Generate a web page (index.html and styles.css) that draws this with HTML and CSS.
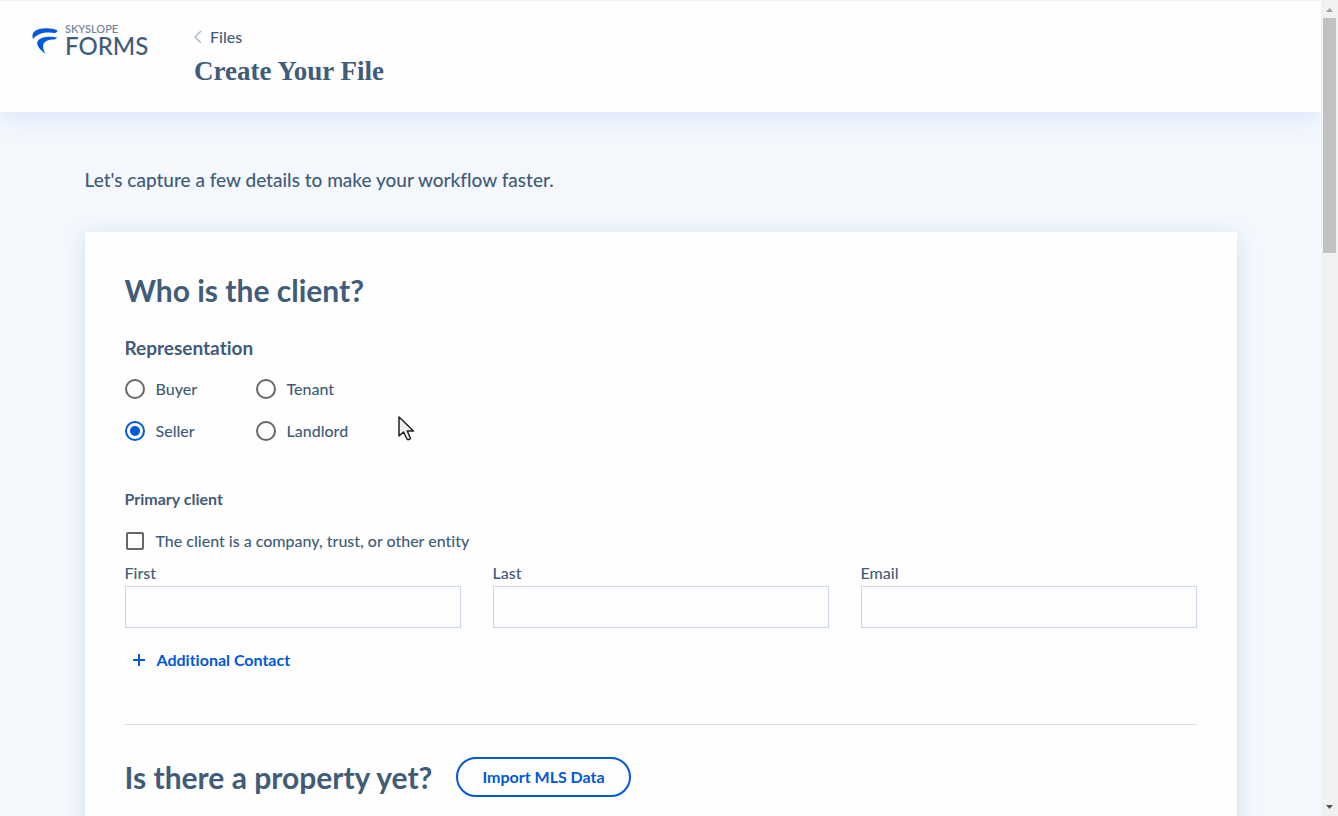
FILE: index.html
```html
<!DOCTYPE html>
<html lang="en">
<head>
    <meta charset="UTF-8">
    <meta name="viewport" content="width=device-width, initial-scale=1.0">
    <title>Create Your File</title>
    <link rel="stylesheet" href="styles.css">
</head>
<body>
    <div class="window">
        <div class="page">
            <header class="header">
                <a href="#" class="logo">
                    <svg class="logo-mark" width="26" height="27" viewBox="0 0 26 27" aria-hidden="true">
                        <path d="M1 11C-1 5 3 1 11 .5C17 0 22 1 25.500 2.500C25 4 24.500 4.500 23 5C15 3.500 6 4.500 1 11Z" fill="#0059da"/>
                        <path d="M13.500 26C8 22 4 17 5.500 13.500C8 9 17 8 25 9.500C24 11 23 11.500 21 11.500C14 12 7.500 14.500 13.500 26Z" fill="#0059da"/>
                    </svg>
                    <span class="logo-text">
                        <span class="logo-small">SKYSLOPE</span>
                        <span class="logo-big">FORMS</span>
                    </span>
                </a>
                <div class="titles">
                    <a href="#" class="back">
                        <svg width="8" height="14" viewBox="0 0 8 14" aria-hidden="true">
                            <path d="M7 1L1 7L7 13" fill="none" stroke="#a9bccd" stroke-width="1.500"/>
                        </svg>
                        Files
                    </a>
                    <h1>Create Your File</h1>
                </div>
            </header>

            <main class="content">
                <p class="lead">Let's capture a few details to make your workflow faster.</p>

                <form class="card">
                    <h2>Who is the client?</h2>

                    <fieldset class="representation">
                        <legend>Representation</legend>
                        <div class="radios">
                            <label class="choice"><input type="radio" name="representation" value="buyer">Buyer</label>
                            <label class="choice"><input type="radio" name="representation" value="tenant">Tenant</label>
                            <label class="choice"><input type="radio" name="representation" value="seller" checked>Seller</label>
                            <label class="choice"><input type="radio" name="representation" value="landlord">Landlord</label>
                        </div>
                    </fieldset>

                    <h3>Primary client</h3>
                    <label class="choice entity"><input type="checkbox" name="entity">The client is a company, trust, or other entity</label>

                    <div class="fields">
                        <div class="field">
                            <label for="first">First</label>
                            <input type="text" id="first">
                        </div>
                        <div class="field">
                            <label for="last">Last</label>
                            <input type="text" id="last">
                        </div>
                        <div class="field">
                            <label for="email">Email</label>
                            <input type="email" id="email">
                        </div>
                    </div>

                    <button type="button" class="add">
                        <svg width="12" height="12" viewBox="0 0 12 12" aria-hidden="true">
                            <path d="M6 0V12M0 6H12" stroke="#0059da" stroke-width="2"/>
                        </svg>
                        Additional Contact
                    </button>

                    <div class="property">
                        <h2>Is there a property yet?</h2>
                        <button type="button" class="import">Import MLS Data</button>
                    </div>
                </form>
            </main>
        </div>

        <div class="scrollbar" aria-hidden="true">
            <svg width="7" height="4" viewBox="0 0 7 4"><path d="M0 4L3.500 0L7 4Z" fill="#a3a3a3"/></svg>
            <div class="thumb"></div>
            <svg class="down" width="7" height="4" viewBox="0 0 7 4"><path d="M0 0L3.500 4L7 0Z" fill="#505050"/></svg>
        </div>
    </div>

    <svg class="cursor" width="18" height="26" viewBox="0 0 18 26" aria-hidden="true">
        <path d="M2 2V21L6.500 17L10 24Q11.500 25.500 13.500 23.500L10.300 16H16.500Z" fill="#f0f0f2" stroke="#222" stroke-width="1.500" stroke-linejoin="round"/>
    </svg>
</body>
</html>
```
FILE: styles.css
```css
* {
    box-sizing: border-box;
}

body {
    margin: 0;
    font-family: Lato, "Liberation Sans", sans-serif;
    font-size: 16px;
    font-weight: 500;
    font-variant-ligatures: none;
    line-height: 20px;
    color: #415c78;
}

h1, h2, h3, p {
    margin: 0;
}

a {
    color: inherit;
    text-decoration: none;
}

button, input {
    font: inherit;
    font-variant-ligatures: none;
}

.window {
    display: grid;
    grid-template-columns: minmax(0, 1fr) 17px;
    height: 100vh;
    overflow: hidden;
}

.page {
    overflow: hidden;
    background: #f4f8fd;
}

/* header */
.header {
    display: flex;
    align-items: flex-start;
    gap: 40px;
    height: 112px;
    padding: 22px 32px;
    border-top: 1px solid #edf2fb;
    background: #fefefe;
    box-shadow: 0 4px 24px #d5e0f8;
}

.logo {
    display: flex;
    gap: 7px;
    width: 122px;
}

.logo-mark {
    margin-top: 5px;
}

.logo-text {
    display: flex;
    flex-direction: column;
}

.logo-small {
    font-size: 11px;
    line-height: 12px;
    color: #6b8198;
}

.logo-big {
    font-size: 24px;
    line-height: 22px;
}

.back {
    display: flex;
    align-items: center;
    gap: 8px;
    line-height: 28px;
}

h1 {
    margin-top: 4px;
    font-family: "Liberation Serif", serif;
    font-size: 27px;
    line-height: 32px;
}

/* form */
.content {
    max-width: 1152px;
    margin: 0 auto;
    padding-top: 56px;
}

.lead {
    margin-bottom: 40px;
    font-size: 19px;
    line-height: 24px;
}

.card {
    min-height: 100vh;
    padding: 40px;
    background: #fefefe;
    box-shadow: 0 4px 20px #d3deea;
}

h2 {
    font-size: 30px;
    line-height: 36px;
}

.representation {
    margin: 28px 0 48px;
    padding: 0;
    border: 0;
}

legend {
    padding: 0;
    font-size: 19px;
    font-weight: 700;
    line-height: 24px;
}

.radios {
    display: grid;
    grid-template-columns: 131px 131px;
    gap: 22px 0;
    margin-top: 19px;
}

.choice {
    display: flex;
    align-items: center;
    gap: 11px;
}

.choice input {
    appearance: none;
    display: grid;
    place-items: center;
    width: 20px;
    height: 20px;
    margin: 0;
    border: 2px solid #666;
    border-radius: 50%;
}

.choice input:checked {
    border-color: #0059da;
}

.choice input:checked::before {
    content: "";
    width: 10px;
    height: 10px;
    border-radius: 50%;
    background: #0059da;
}

.choice input[type="checkbox"] {
    width: 18px;
    height: 18px;
    margin: 0 1px;
    border-radius: 2px;
}

h3 {
    font-size: 16px;
    line-height: 20px;
}

.entity {
    margin-top: 22px;
}

.fields {
    display: grid;
    grid-template-columns: repeat(3, 1fr);
    gap: 32px;
    margin-top: 12px;
}

.field label {
    display: block;
}

.field input {
    display: block;
    width: 100%;
    height: 42px;
    margin-top: 3px;
    padding: 0 12px;
    border: 1px solid #cbd7e4;
    background: #fefefe;
}

.add {
    display: flex;
    align-items: center;
    gap: 12px;
    margin: 20px 0 52px;
    padding: 0 8px;
    border: 0;
    background: none;
    font-weight: 700;
    line-height: 24px;
    color: #0059da;
}

.property {
    display: flex;
    align-items: center;
    gap: 24px;
    padding-top: 32px;
    border-top: 1px solid #d9dde3;
}

.import {
    height: 40px;
    padding: 0 24px;
    border: 2px solid #0059da;
    border-radius: 20px;
    background: #fefefe;
    font-weight: 700;
    color: #0059da;
}

/* scrollbar */
.scrollbar {
    display: flex;
    flex-direction: column;
    align-items: center;
    padding: 8px 2px 7px;
    background: #f1f1f1;
}

.thumb {
    width: 13px;
    height: 235px;
    margin-top: 6px;
    background: #c1c1c1;
}

.down {
    margin-top: auto;
}

.cursor {
    position: absolute;
    left: 397px;
    top: 415px;
}
```
